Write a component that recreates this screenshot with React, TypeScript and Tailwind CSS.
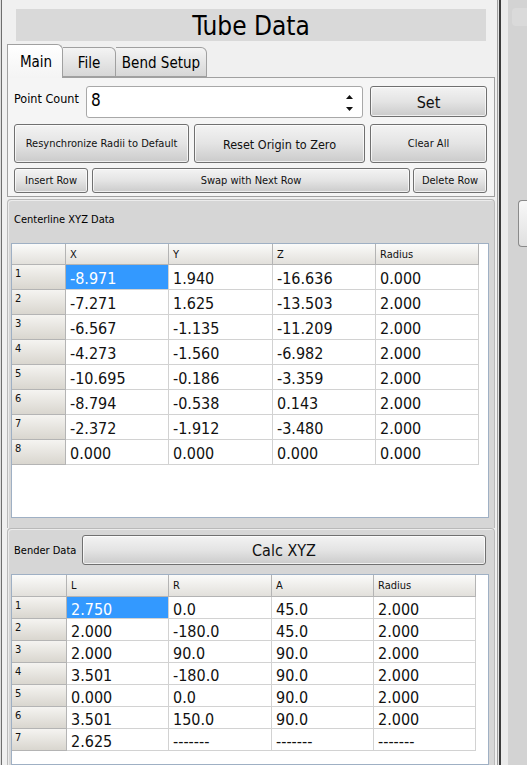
import React from "react";

type TableProps = {
  headers: string[];
  rows: string[][];
  cols: string;
  headH: string;
  rowH: string;
  className: string;
};

function Table({ headers, rows, cols, headH, rowH, className }: TableProps) {
  return (
    <div className={"border border-[#9fb0c4] bg-white overflow-hidden " + className}>
      <div className={"grid " + cols}>
        <div className={"border-r border-b border-[#b4b4b4] bg-linear-to-b from-[#fbfbfa] to-[#e2e0db] " + headH} />
        {headers.map((h) => (
          <div
            key={h}
            className={"border-r border-b border-[#b4b4b4] bg-linear-to-b from-[#fbfbfa] to-[#e2e0db] pl-[4px] pt-[4px] text-[11px] leading-[13px] text-[#111] " + headH}
          >
            {h}
          </div>
        ))}
        {rows.map((r, i) => (
          <React.Fragment key={i}>
            <div
              className={"border-r border-b border-[#b4b4b4] bg-linear-to-b from-[#f5f4f1] to-[#d9d6cf] pl-[3px] pt-[3px] text-[11px] leading-[12px] text-[#111] " + rowH}
            >
              {i + 1}
            </div>
            {r.map((v, j) => (
              <div
                key={j}
                className={
                  "border-r border-b border-[#d2d2d2] flex items-center pl-[4px] pt-[4px] text-[16px] leading-none " +
                  rowH +
                  (i === 0 && j === 0 ? " bg-[#3399ff] text-white" : " text-[#111]")
                }
              >
                {v}
              </div>
            ))}
          </React.Fragment>
        ))}
      </div>
    </div>
  );
}

function Btn({ className, children }: { className: string; children?: React.ReactNode }) {
  return (
    <div
      className={
        "flex items-center justify-center rounded-[3px] border border-[#707070] bg-linear-to-b from-[#f3f3f3] via-[#e4e4e4] to-[#cbcbcb] text-[#111] shadow-[inset_0_0_0_1px_rgba(255,255,255,0.7)] " +
        className
      }
    >
      {children}
    </div>
  );
}

const centerline = [
  ["-8.971", "1.940", "-16.636", "0.000"],
  ["-7.271", "1.625", "-13.503", "2.000"],
  ["-6.567", "-1.135", "-11.209", "2.000"],
  ["-4.273", "-1.560", "-6.982", "2.000"],
  ["-10.695", "-0.186", "-3.359", "2.000"],
  ["-8.794", "-0.538", "0.143", "2.000"],
  ["-2.372", "-1.912", "-3.480", "2.000"],
  ["0.000", "0.000", "0.000", "0.000"],
];

const bender = [
  ["2.750", "0.0", "45.0", "2.000"],
  ["2.000", "-180.0", "45.0", "2.000"],
  ["2.000", "90.0", "90.0", "2.000"],
  ["3.501", "-180.0", "90.0", "2.000"],
  ["0.000", "0.0", "90.0", "2.000"],
  ["3.501", "150.0", "90.0", "2.000"],
  ["2.625", "-------", "-------", "-------"],
];

export default function App() {
  return (
    <div className="w-[527px] h-[765px] overflow-hidden flex bg-[#d3d3d3] font-['DejaVu_Sans_Condensed','Liberation_Sans',sans-serif] text-black">
      <div className="w-[1px] bg-[#dedede]" />
      <div className="w-[1px] bg-[#6e6e6e]" />
      {/* main panel */}
      <div className="w-[495px] h-full flex flex-col bg-[#f0f0f0]">
        <div className="mt-[9px] ml-[14px] w-[470px] h-[32px] bg-[#d9d9d9] flex items-center justify-center pt-[1px] text-[26px] leading-none">
          Tube Data
        </div>

        {/* tabs */}
        <div className="mt-[3px] ml-[5px] h-[33px] flex items-end relative z-10">
          <div className="w-[56px] h-[34px] -mb-[1px] border border-b-0 border-[#a0a0a0] rounded-tr-[6px] bg-linear-to-b from-[#ffffff] to-[#f4f4f4] flex items-center justify-center pt-[2px] pl-[2px] text-[15px]">
            Main
          </div>
          <div className="w-[53px] h-[30px] border border-l-0 border-[#a0a0a0] rounded-tr-[6px] bg-linear-to-b from-[#f4f4f4] to-[#d7d7d7] flex items-center justify-center pt-[2px] text-[15px]">
            File
          </div>
          <div className="w-[91px] h-[30px] border border-l-0 border-[#a0a0a0] rounded-tr-[6px] bg-linear-to-b from-[#f4f4f4] to-[#d7d7d7] flex items-center justify-center pt-[2px] text-[15px]">
            Bend Setup
          </div>
        </div>
        <div className="ml-[5px] w-[488px] h-[120px] border border-[#a0a0a0] bg-[#f5f5f5] pl-[6px] pt-[8px]">
          <div className="flex h-[32px]">
            <div className="w-[72px] pt-[5px] text-[12.5px] leading-[16px]">Point Count</div>
            <div className="w-[277px] h-[32px] border border-[#a8a8a8] rounded-[3px] bg-white flex items-start justify-between pl-[4px] pr-[9px]">
              <span className="pt-[5px] text-[17px] leading-none">8</span>
              <div className="mt-[8px] flex flex-col gap-[8px]">
                <svg width="7" height="4" viewBox="0 0 7 4">
                  <path d="M0 4 L3.5 0 L7 4 Z" fill="#111" />
                </svg>
                <svg width="7" height="4" viewBox="0 0 7 4">
                  <path d="M0 0 L3.5 4 L7 0 Z" fill="#111" />
                </svg>
              </div>
            </div>
            <Btn className="ml-[7px] w-[117px] h-[31px] pt-[3px] text-[16px]">Set</Btn>
          </div>
          <div className="mt-[6px] flex gap-[5px] h-[39px]">
            <Btn className="w-[175px] h-[39px] pt-[2px] text-[11px]">Resynchronize Radii to Default</Btn>
            <Btn className="w-[171px] h-[39px] pt-[3px] text-[12.5px]">Reset Origin to Zero</Btn>
            <Btn className="w-[117px] h-[39px] pt-[2px] text-[11px]">Clear All</Btn>
          </div>
          <div className="mt-[5px] flex h-[25px]">
            <Btn className="w-[74px] h-[25px] pt-[1px] text-[11px]">Insert Row</Btn>
            <Btn className="ml-[4px] w-[318px] h-[25px] pt-[1px] text-[11px]">Swap with Next Row</Btn>
            <Btn className="ml-[3px] w-[74px] h-[25px] pt-[1px] text-[11px]">Delete Row</Btn>
          </div>
        </div>

        {/* centerline group */}
        <div className="mt-[2px] ml-[5px] w-[488px] h-[329px] border border-b-0 border-[#b9b9b9] rounded-t-[4px] bg-[#d6d6d6] shadow-[inset_1px_1px_0_#ececec]">
          <div className="h-[43px] pl-[6px] pt-[13px] text-[11px] leading-[13px]">Centerline XYZ Data</div>
          <Table
            headers={["X", "Y", "Z", "Radius"]}
            rows={centerline}
            cols="grid-cols-[54px_103px_104px_103px_103px]"
            headH="h-[21px]"
            rowH="h-[25px]"
            className="ml-[3px] w-[478px] h-[275px]"
          />
        </div>

        {/* bender group */}
        <div className="ml-[5px] w-[488px] flex-1 border border-b-0 border-[#b9b9b9] rounded-t-[4px] bg-[#d6d6d6] shadow-[inset_1px_1px_0_#ececec] flex flex-col">
          <div className="mt-[6px] flex items-center h-[30px]">
            <div className="pl-[6px] w-[74px] text-[11px] leading-[13px]">Bender Data</div>
            <Btn className="w-[404px] h-[30px] pt-[2px] text-[16px]">Calc XYZ</Btn>
          </div>
          <Table
            headers={["L", "R", "A", "Radius"]}
            rows={bender}
            cols="grid-cols-[55px_102px_103px_102px_102px]"
            headH="h-[22px]"
            rowH="h-[22px]"
            className="mt-[9px] ml-[3px] w-[478px] flex-1"
          />
        </div>
      </div>

      {/* right edge */}
      <div className="w-[1px] bg-[#a0a0a0]" />
      <div className="w-[1px] bg-[#e4e4e4]" />
      <div className="w-[2px] bg-[#3c3c3c]" />
      <div className="w-[7px] bg-[#ebebeb]" />
      <div className="flex-1 bg-[#d3d3d3] flex flex-col">
        <div className="ml-[4px] mt-[8px] h-[18px] rounded-l-[4px] bg-[#dadada]" />
        <div className="ml-[10px] mt-[174px] h-[47px] rounded-l-[4px] border border-r-0 border-[#8a8a8a] bg-linear-to-b from-[#f8f8f8] to-[#e0e0e0]" />
      </div>
    </div>
  );
}
